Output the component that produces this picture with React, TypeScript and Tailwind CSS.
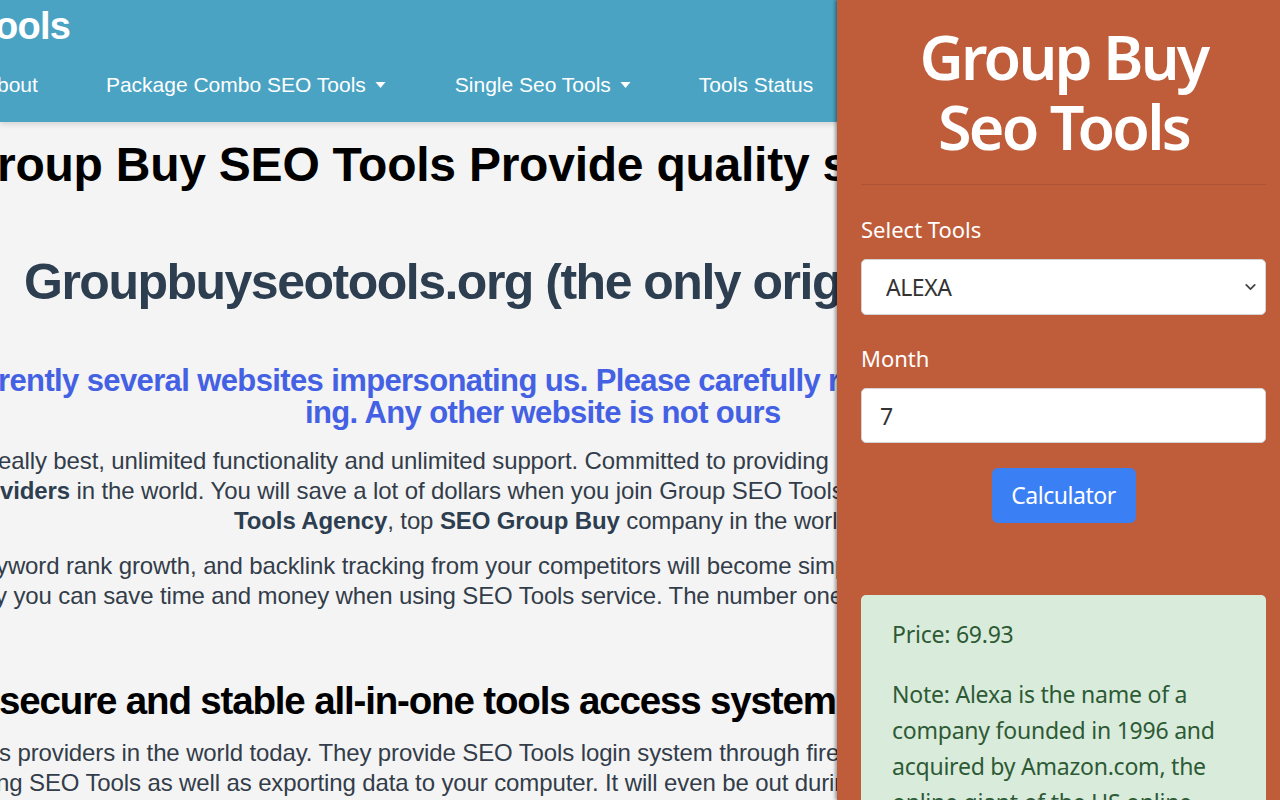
import React from 'react';
import { ChevronDown } from 'lucide-react';

const navItems = [
  { label: 'bout', caret: false, ml: '-ml-[3px]' },
  { label: 'Package Combo SEO Tools', caret: true, ml: 'ml-[68px]' },
  { label: 'Single Seo Tools', caret: true, ml: 'ml-[69px]' },
  { label: 'Tools Status', caret: false, ml: 'ml-[68px]' },
];

const Caret = () => (
  <svg viewBox="0 0 10 6" className="ml-[9px] h-[6px] w-[11px] fill-white">
    <path d="M0 0h10L5 6z" />
  </svg>
);

const SitePage: React.FC = () => {
  return (
    <div className="relative min-w-0 flex-1 overflow-hidden bg-[#f4f4f4] font-['Liberation_Sans',Arial,sans-serif]">
      <header className="h-[122px] bg-[#4aa3c3] text-white shadow-[0_2px_6px_rgba(0,0,0,0.15)]">
        <div className="-ml-[5px] whitespace-nowrap pt-[3px] text-[38px] font-bold leading-[46px] tracking-[-0.02em]">
          ools
        </div>
        <nav className="mt-[21px] flex items-center whitespace-nowrap text-[21px] leading-[30px]">
          {navItems.map((item) => (
            <span key={item.label} className={`flex items-center ${item.ml}`}>
              {item.label}
              {item.caret && <Caret />}
            </span>
          ))}
        </nav>
      </header>

      <main className="whitespace-nowrap">
        <h1 className="-ml-[3px] mt-[18px] text-[48px] font-bold leading-[50px] tracking-[-0.005em] text-black">
          roup Buy SEO Tools Provide quality services
        </h1>
        <h2 className="ml-[24px] mt-[64px] text-[50px] font-bold leading-[56px] tracking-[-0.03em] text-[#2c3e50]">
          Groupbuyseotools.org (the only original)
        </h2>
        <div className="mt-[55px] text-[31px] font-bold leading-[32px] tracking-[-0.02em] text-[#4461e4]">
          <p className="-ml-[2px]">rently several websites impersonating us. Please carefully read</p>
          <p className="ml-[305px]">ing. Any other website is not ours</p>
        </div>
        <div className="mt-[17px] text-[24px] leading-[30px] tracking-[-0.005em] text-[#333d4a]">
          <p className="-ml-[2px]">eally best, unlimited functionality and unlimited support. Committed to providing</p>
          <p>
            <b className="text-[#2c3e50]">viders</b> in the world. You will save a lot of dollars when you join Group SEO Tools
          </p>
          <p className="ml-[234px]">
            <b className="text-[#2c3e50]">Tools Agency</b>, top <b className="text-[#2c3e50]">SEO Group Buy</b> company in the world
          </p>
        </div>
        <div className="mt-[15px] text-[24px] leading-[30px] tracking-[-0.005em] text-[#333d4a]">
          <p className="-ml-[4px]">yword rank growth, and backlink tracking from your competitors will become simple</p>
          <p className="-ml-[5px]">y you can save time and money when using SEO Tools service. The number one</p>
        </div>
        <h2 className="-ml-[1px] mt-[67px] text-[38.5px] font-bold leading-[46px] tracking-[-0.03em] text-black">
          secure and stable all-in-one tools access system
        </h2>
        <div className="mt-[14px] text-[24px] leading-[30px] tracking-[-0.005em] text-[#333d4a]">
          <p className="-ml-[1px]">s providers in the world today. They provide SEO Tools login system through firewall</p>
          <p className="-ml-[4px]">ng SEO Tools as well as exporting data to your computer. It will even be out during</p>
        </div>
      </main>
    </div>
  );
};

const CalculatorPanel: React.FC = () => {
  return (
    <aside className="relative z-10 w-[443px] shrink-0 bg-[#bf5d3b] pl-6 pr-[14px] font-['Noto_Sans','Open_Sans',sans-serif] text-white shadow-[-2px_0_3px_rgba(0,0,0,0.35)]">
      <h1 className="pt-[22px] text-center text-[61px] font-semibold leading-[70px] tracking-[-0.045em]">
        Group Buy
        <br />
        Seo Tools
      </h1>
      <hr className="mt-[22px] border-t border-black/10" />

      <label className="mt-[29px] block text-[22px] leading-[30px]">Select Tools</label>
      <div className="relative mt-[15px]">
        <select
          defaultValue="ALEXA"
          className="block h-[56px] w-full appearance-none rounded-[5px] border border-[#d4d4d4] bg-white pl-6 text-[23px] tracking-[-0.02em] text-[#333]"
        >
          <option>ALEXA</option>
          <option>AHREFS</option>
          <option>SEMRUSH</option>
        </select>
        <ChevronDown className="pointer-events-none absolute right-[7px] top-1/2 h-[17px] w-[17px] -translate-y-1/2 text-[#444]" strokeWidth={2.5} />
      </div>

      <label className="mt-[28px] block text-[22px] leading-[30px]">Month</label>
      <input
        defaultValue="7"
        className="mt-[15px] block h-[55px] w-full rounded-[5px] border border-[#d4d4d4] bg-white pl-[18px] text-[23px] text-[#333] outline-none"
      />

      <div className="mt-[25px] flex justify-center">
        <button className="h-[55px] w-[144px] rounded-[6px] bg-[#3b7ff5] text-[23px] tracking-[-0.02em] text-white">
          Calculator
        </button>
      </div>

      <div className="mt-[72px] rounded-[5px] bg-[#d9ebdb] pl-[31px] pr-4 pt-[21px] text-[23px] leading-[36px] tracking-[-0.01em] text-[#2d5a35]">
        <p>Price: 69.93</p>
        <p className="mt-[24px]">
          Note: Alexa is the name of a company founded in 1996 and acquired by Amazon.com, the online giant of the US online
          retail market.
        </p>
      </div>
    </aside>
  );
};

export default function App() {
  return (
    <div className="flex h-[800px] w-[1280px] overflow-hidden">
      <SitePage />
      <CalculatorPanel />
    </div>
  );
}
